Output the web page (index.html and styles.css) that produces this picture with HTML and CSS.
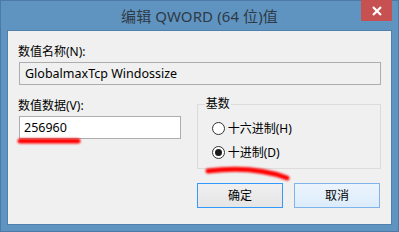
FILE: index.html
```html
<!DOCTYPE html>
<html>
<head>
<meta charset="utf-8">
<link rel="stylesheet" href="styles.css">
</head>
<body>
<div class="window">
  <div class="titlebar">
    <div class="title">编辑 QWORD (64 位)值</div>
    <div class="close"><svg width="12" height="10" viewBox="0 0 12 10"><path d="M2 1 L10 9 M10 1 L2 9" stroke="#fff" stroke-width="2.2"/></svg></div>
  </div>
  <div class="client">
    <div class="label first">数值名称(N):</div>
    <div class="field readonly">GlobalmaxTcp Windossize</div>
    <div class="row">
      <div class="col-left">
        <div class="label">数值数据(V):</div>
        <div class="field value">256960</div>
      </div>
      <fieldset class="group">
        <legend>基数</legend>
        <div class="radio"><span class="dot"></span><span>十六进制(H)</span></div>
        <div class="radio checked"><span class="dot"></span><span>十进制(D)</span></div>
      </fieldset>
    </div>
    <div class="buttons">
      <div class="btn ok">确定</div>
      <div class="btn cancel">取消</div>
    </div>
    <svg class="mark mark1" width="70" height="14" viewBox="0 0 70 14"><defs><filter id="b1" filterUnits="userSpaceOnUse" x="0" y="0" width="70" height="14"><feGaussianBlur stdDeviation="0.8"/></filter></defs><path d="M4 7 L62 7" stroke="#ff0000" stroke-width="5" stroke-linecap="round" filter="url(#b1)"/></svg>
    <svg class="mark mark2" width="90" height="20" viewBox="0 0 90 20"><defs><filter id="b2" filterUnits="userSpaceOnUse" x="0" y="0" width="90" height="20"><feGaussianBlur stdDeviation="0.8"/></filter></defs><path d="M5 6 C30 3 60 4 84 13" stroke="#ff0000" stroke-width="5" fill="none" stroke-linecap="round" filter="url(#b2)"/></svg>
  </div>
</div>
</body>
</html>
```

FILE: styles.css
```css
* { box-sizing: border-box; }
html, body { margin: 0; padding: 0; }
body { width: 399px; height: 232px; overflow: hidden; font-family: "Noto Sans", "Noto Sans CJK SC", sans-serif; }
.window {
  width: 399px; height: 232px;
  background: #6094c0;
  border: 1px solid #4c7aa5;
  display: flex; flex-direction: column;
}
.titlebar {
  height: 29px; position: relative;
  display: flex; align-items: center; justify-content: center;
}
.title { font-size: 15px; color: #2e3a46; margin-top: -1px; letter-spacing: 0.1px; }
.close {
  position: absolute; right: 6px; top: -1px;
  width: 31px; height: 21px; background: #c75050;
  display: flex; align-items: center; justify-content: center;
}
.client {
  position: relative;
  margin: 0 6px; height: 195px;
  background: #f0f0f0;
  border: 1px solid #4f7fab;
  padding: 0 10px 0 10px;
  font-size: 12px; color: #000;
}
.label { height: 15px; line-height: 15px; padding-left: 0; }
.label.first { margin-top: 13px; }
.field {
  border: 1px solid #adadad; height: 23px; line-height: 21px;
  padding-left: 5px; margin-left: 1px; font-size: 12.5px;
}
.readonly { background: #f0f0f0; margin-top: 3px; width: 362px; }
.row { display: flex; margin-top: 15px; }
.col-left { width: 172px; }
.value { background: #fff; margin-top: 3px; width: 162px; padding-left: 4px; }
.col-left .label { margin-top: -2px; }
.group {
  margin: -2px 0 0 12px; padding: 0; width: 190px; height: 71px;
  border: 1px solid #dcdcdc; border-radius: 0;
}
.group legend { padding: 0 1px; margin-left: 7px; font-size: 12px; line-height: 12px; }
.radio { display: flex; align-items: center; height: 14px; margin-left: 14px; }
.radio:first-of-type { margin-top: 11px; }
.radio + .radio { margin-top: 10px; }
.dot {
  width: 13px; height: 13px; border-radius: 50%;
  border: 1px solid #333; background: #fff; margin-right: 3px;
  display: flex; align-items: center; justify-content: center;
}
.checked .dot::after { content: ""; width: 7px; height: 7px; border-radius: 50%; background: #1a1a1a; }
.buttons { display: flex; justify-content: flex-end; gap: 11px; margin-top: 14px; padding-right: 1px; }
.btn {
  width: 86px; height: 25px; line-height: 23px; text-align: center;
  font-size: 12px;
}
.ok { border: 1px solid #3399ff; background: linear-gradient(#f0f0f0, #e5e5e5); }
.cancel { border: 1px solid #7eb4ea; background: linear-gradient(#ecf4fc, #dcecfc); }
.mark { position: absolute; }
.mark1 { left: 8px; top: 103px; }
.mark2 { left: 195px; top: 134px; }
```
